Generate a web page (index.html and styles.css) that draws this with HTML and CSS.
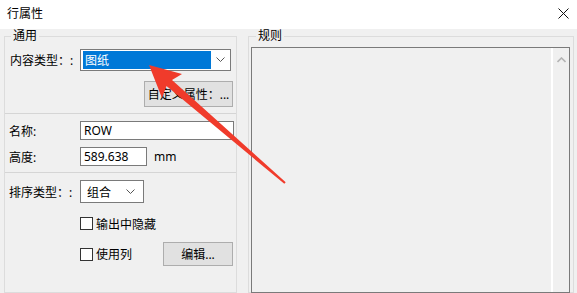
FILE: index.html
```html
<!DOCTYPE html>
<html lang="zh-CN">
<head>
    <meta charset="UTF-8">
    <meta name="viewport" content="width=device-width, initial-scale=1.0">
    <title>行属性</title>
    <link rel="stylesheet" href="styles.css">
</head>
<body>
    <div class="titlebar">
        <span class="title">行属性</span>
        <svg class="close" width="11" height="11" viewBox="0 0 11 11">
            <path d="M0.5 0.5 L10.5 10.5 M10.5 0.5 L0.5 10.5" stroke="#111" stroke-width="1" fill="none"/>
        </svg>
    </div>

    <div class="content">
        <fieldset class="group general">
            <legend>通用</legend>

            <div class="row row-combo">
                <label class="label">内容类型：:</label>
                <div class="combo combo-wide">
                    <span class="combo-value selected">图纸</span>
                    <span class="combo-arrow">
                        <svg width="9" height="6" viewBox="0 0 9 6"><path d="M0.5 0.5 L4.5 4.5 L8.5 0.5" stroke="#555" fill="none"/></svg>
                    </span>
                </div>
            </div>

            <div class="row row-end">
                <button class="btn btn-custom">自定义属性：...</button>
            </div>

            <hr class="sep">

            <div class="row row-field">
                <label class="label">名称:</label>
                <input class="field field-name" type="text" value="ROW">
            </div>
            <div class="row row-field">
                <label class="label">高度:</label>
                <input class="field field-height" type="text" value="589.638">
                <span class="unit">mm</span>
            </div>

            <hr class="sep">

            <div class="row row-sort">
                <label class="label">排序类型：:</label>
                <div class="combo combo-small">
                    <span class="combo-value">组合</span>
                    <span class="combo-arrow">
                        <svg width="9" height="6" viewBox="0 0 9 6"><path d="M0.5 0.5 L4.5 4.5 L8.5 0.5" stroke="#555" fill="none"/></svg>
                    </span>
                </div>
            </div>

            <div class="row row-check">
                <span class="check"></span>
                <span class="check-text">输出中隐藏</span>
            </div>
            <div class="row row-check row-columns">
                <span class="check"></span>
                <span class="check-text">使用列</span>
                <button class="btn btn-edit">编辑...</button>
            </div>
        </fieldset>

        <fieldset class="group rules">
            <legend>规则</legend>
            <div class="listbox">
                <div class="list"></div>
                <div class="scrollbar">
                    <svg width="9" height="6" viewBox="0 0 9 6"><path d="M0.5 5 L4.5 1 L8.5 5" stroke="#b4b4b4" stroke-width="1.6" fill="none"/></svg>
                </div>
            </div>
        </fieldset>
    </div>

    <!-- annotation arrow drawn over the dialog -->
    <svg class="arrow" width="577" height="293" viewBox="0 0 577 293">
        <polygon fill="#f03b2b" points="149,65 182,74 172,80 285.7,182.2 284.3,183.8 166.5,86 162,98"/>
    </svg>
</body>
</html>
```

FILE: styles.css
```css
html {
    overflow: hidden;
}
body {
    margin: 0;
    width: 577px;
    height: 293px;
    position: relative;
    overflow: hidden;
    background-color: #f0f0f0;
    font-family: "Noto Sans", "Noto Sans CJK SC", sans-serif;
    font-size: 12px;
    color: #000;
}
.titlebar {
    height: 29px;
    background-color: #ffffff;
    display: flex;
    align-items: center;
    justify-content: space-between;
    padding: 0 8px 0 7px;
}
.title {
    font-size: 12px;
    line-height: 14px;
    margin-top: -2px;
}
.close {
    margin-top: -3px;
}
.content {
    display: flex;
    gap: 11px;
    padding: 0 3px 0 4px;
}
.group {
    margin: 0;
    border: 1px solid #dcdcdc;
    min-width: 0;
    height: 264px;
    box-sizing: border-box;
}
.group legend {
    font-size: 12px;
    line-height: 14px;
    padding: 0 2px;
}
.general {
    width: 233px;
    padding: 6px 0 0 0;
}
.general legend {
    margin-left: 6px;
}
.rules {
    width: 326px;
    padding: 4px 3px 0 2px;
}
.rules legend {
    margin-left: 5px;
}
.row {
    display: flex;
    align-items: center;
    padding-left: 4px;
}
.label {
    width: 71px;
    flex-shrink: 0;
    white-space: nowrap;
}
.row-combo {
    height: 22px;
    padding-left: 5px;
}
.row-combo .label {
    width: 70px;
}
.combo {
    box-sizing: border-box;
    border: 1px solid #7a7a7a;
    background-color: #ffffff;
    display: flex;
}
.combo-wide {
    width: 151px;
    height: 22px;
    padding: 1px 0 1px 2px;
}
.combo-value {
    display: flex;
    align-items: center;
    padding-left: 2px;
}
.selected {
    width: 128px;
    box-sizing: border-box;
    background-color: #0078d7;
    color: #ffffff;
}
.combo-arrow {
    flex: 1;
    display: flex;
    align-items: center;
    justify-content: center;
}
.combo-small {
    width: 64px;
    height: 23px;
    padding-left: 4px;
}
.combo-small .combo-arrow {
    padding-left: 6px;
}
.row-end {
    justify-content: flex-end;
    margin-top: 10px;
    padding-right: 3px;
}
.btn {
    font-family: inherit;
    font-size: 12px;
    color: #000;
    background-color: #e1e1e1;
    border: 1px solid #adadad;
    padding: 0;
    box-sizing: border-box;
}
.btn-custom {
    width: 89px;
    height: 26px;
}
.sep {
    border: 0;
    border-top: 1px solid #d5d5d5;
    margin: 6px 0 0 0;
    height: 0;
}
.row-field {
    margin-top: 7px;
    height: 19px;
}
.field {
    box-sizing: border-box;
    height: 19px;
    border: 1px solid #7a7a7a;
    background-color: #ffffff;
    font-family: inherit;
    font-size: 12px;
    color: #000;
    padding: 0 0 0 3px;
    margin: 0;
    outline: none;
}
.field-name {
    width: 154px;
}
.field-height {
    width: 67px;
}
.unit {
    margin-left: 7px;
}
.row-sort {
    margin-top: 7px;
    height: 23px;
}
.row-check {
    padding-left: 75px;
    margin-top: 14px;
    height: 13px;
}
.row-columns {
    margin-top: 12px;
    height: 24px;
    padding-right: 3px;
}
.check {
    width: 13px;
    height: 13px;
    box-sizing: border-box;
    border: 1px solid #333333;
    background-color: #ffffff;
    flex-shrink: 0;
}
.check-text {
    margin-left: 3px;
}
.btn-edit {
    margin-left: auto;
    width: 70px;
    height: 24px;
}
.listbox {
    box-sizing: border-box;
    width: 319px;
    height: 246px;
    border: 1px solid #7a7a7a;
    display: flex;
}
.list {
    flex: 1;
}
.scrollbar {
    width: 16px;
    border-left: 2px solid #ffffff;
    display: flex;
    justify-content: center;
    padding-top: 9px;
    align-items: flex-start;
}
.arrow {
    position: absolute;
    top: 0;
    left: 0;
    pointer-events: none;
}
```
